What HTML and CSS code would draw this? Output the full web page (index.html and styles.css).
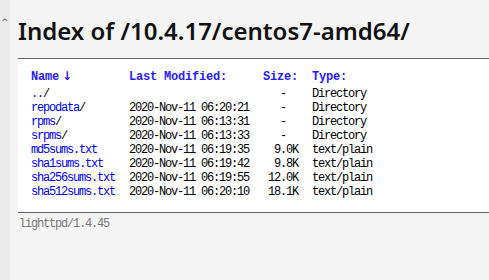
FILE: index.html
```html
<!DOCTYPE html>
<html>
<head>
<meta charset="utf-8">
<title>Index of /10.4.17/centos7-amd64/</title>
<link rel="stylesheet" href="styles.css">
</head>
<body>
<div class="strip"><span class="caret">^</span></div>
<div class="page">
  <h2 class="title">Index of /10.4.17/centos7-amd64/</h2>
  <div class="list">
    <table class="files">
      <thead>
        <tr>
          <th class="n"><a href="#">Name</a><span class="arrow">↓</span></th>
          <th class="m"><a href="#">Last Modified:</a></th>
          <th class="s"><a href="#">Size:</a></th>
          <th class="t"><a href="#">Type:</a></th>
        </tr>
      </thead>
      <tbody>
        <tr><td class="n"><a href="#">..</a>/</td><td class="m">&nbsp;</td><td class="s">-&nbsp;&nbsp;</td><td class="t">Directory</td></tr>
        <tr><td class="n"><a href="#">repodata</a>/</td><td class="m">2020-Nov-11 06:20:21</td><td class="s">-&nbsp;&nbsp;</td><td class="t">Directory</td></tr>
        <tr><td class="n"><a href="#">rpms</a>/</td><td class="m">2020-Nov-11 06:13:31</td><td class="s">-&nbsp;&nbsp;</td><td class="t">Directory</td></tr>
        <tr><td class="n"><a href="#">srpms</a>/</td><td class="m">2020-Nov-11 06:13:33</td><td class="s">-&nbsp;&nbsp;</td><td class="t">Directory</td></tr>
        <tr><td class="n"><a href="#">md5sums.txt</a></td><td class="m">2020-Nov-11 06:19:35</td><td class="s">9.0K</td><td class="t">text/plain</td></tr>
        <tr><td class="n"><a href="#">sha1sums.txt</a></td><td class="m">2020-Nov-11 06:19:42</td><td class="s">9.8K</td><td class="t">text/plain</td></tr>
        <tr><td class="n"><a href="#">sha256sums.txt</a></td><td class="m">2020-Nov-11 06:19:55</td><td class="s">12.0K</td><td class="t">text/plain</td></tr>
        <tr><td class="n"><a href="#">sha512sums.txt</a></td><td class="m">2020-Nov-11 06:20:10</td><td class="s">18.1K</td><td class="t">text/plain</td></tr>
      </tbody>
    </table>
  </div>
  <div class="foot">lighttpd/1.4.45</div>
</div>
</body>
</html>
```

FILE: styles.css
```css
html, body {
  margin: 0;
  padding: 0;
  height: 100%;
}
body {
  display: flex;
  background: #f4f4f4;
  overflow: hidden;
}
.strip {
  width: 10px;
  flex: none;
  background: #ebebeb;
  position: relative;
}
.caret {
  position: absolute;
  left: 1px;
  top: 17px;
  font: 9px "DejaVu Sans", sans-serif;
  color: #555;
}
.page {
  flex: 1;
  padding-left: 8px;
  min-width: 0;
}
.title {
  margin: 0;
  padding-top: 16px;
  height: 58px;
  box-sizing: border-box;
  font: 600 24px/30px "Noto Sans", sans-serif;
  color: #111;
  white-space: nowrap;
}
.list {
  background: #fff;
  border-top: 1px solid #646464;
  border-bottom: 1px solid #646464;
  padding-top: 10px;
  padding-bottom: 13px;
}
.files {
  margin-left: 13px;
  border-collapse: collapse;
  border-spacing: 0;
}
.files th, .files td {
  font-family: "Liberation Mono", monospace;
  font-size: 12px;
  line-height: 14px;
  letter-spacing: -1.2px;
  text-align: left;
  padding: 0 14px 0 0;
  white-space: pre;
}
.files th {
  font-weight: bold;
  letter-spacing: -0.2px;
  padding-bottom: 3px;
}
.files a {
  color: #0000ff;
  text-decoration: none;
}
.files th a {
  color: #2a1cff;
}
.arrow {
  color: #2a1cff;
  font-family: "DejaVu Sans", sans-serif;
  font-size: 12px;
  margin-left: 3px;
}
.files .n { width: 83px; }
.files .m { width: 120px; }
.files .s { width: 35px; text-align: right; }
.files .t { padding-right: 0; }
.foot {
  font-family: "Liberation Mono", monospace;
  font-size: 12px;
  line-height: 14px;
  letter-spacing: -1.2px;
  color: #787878;
  padding-top: 4px;
  padding-left: 1px;
}
```
